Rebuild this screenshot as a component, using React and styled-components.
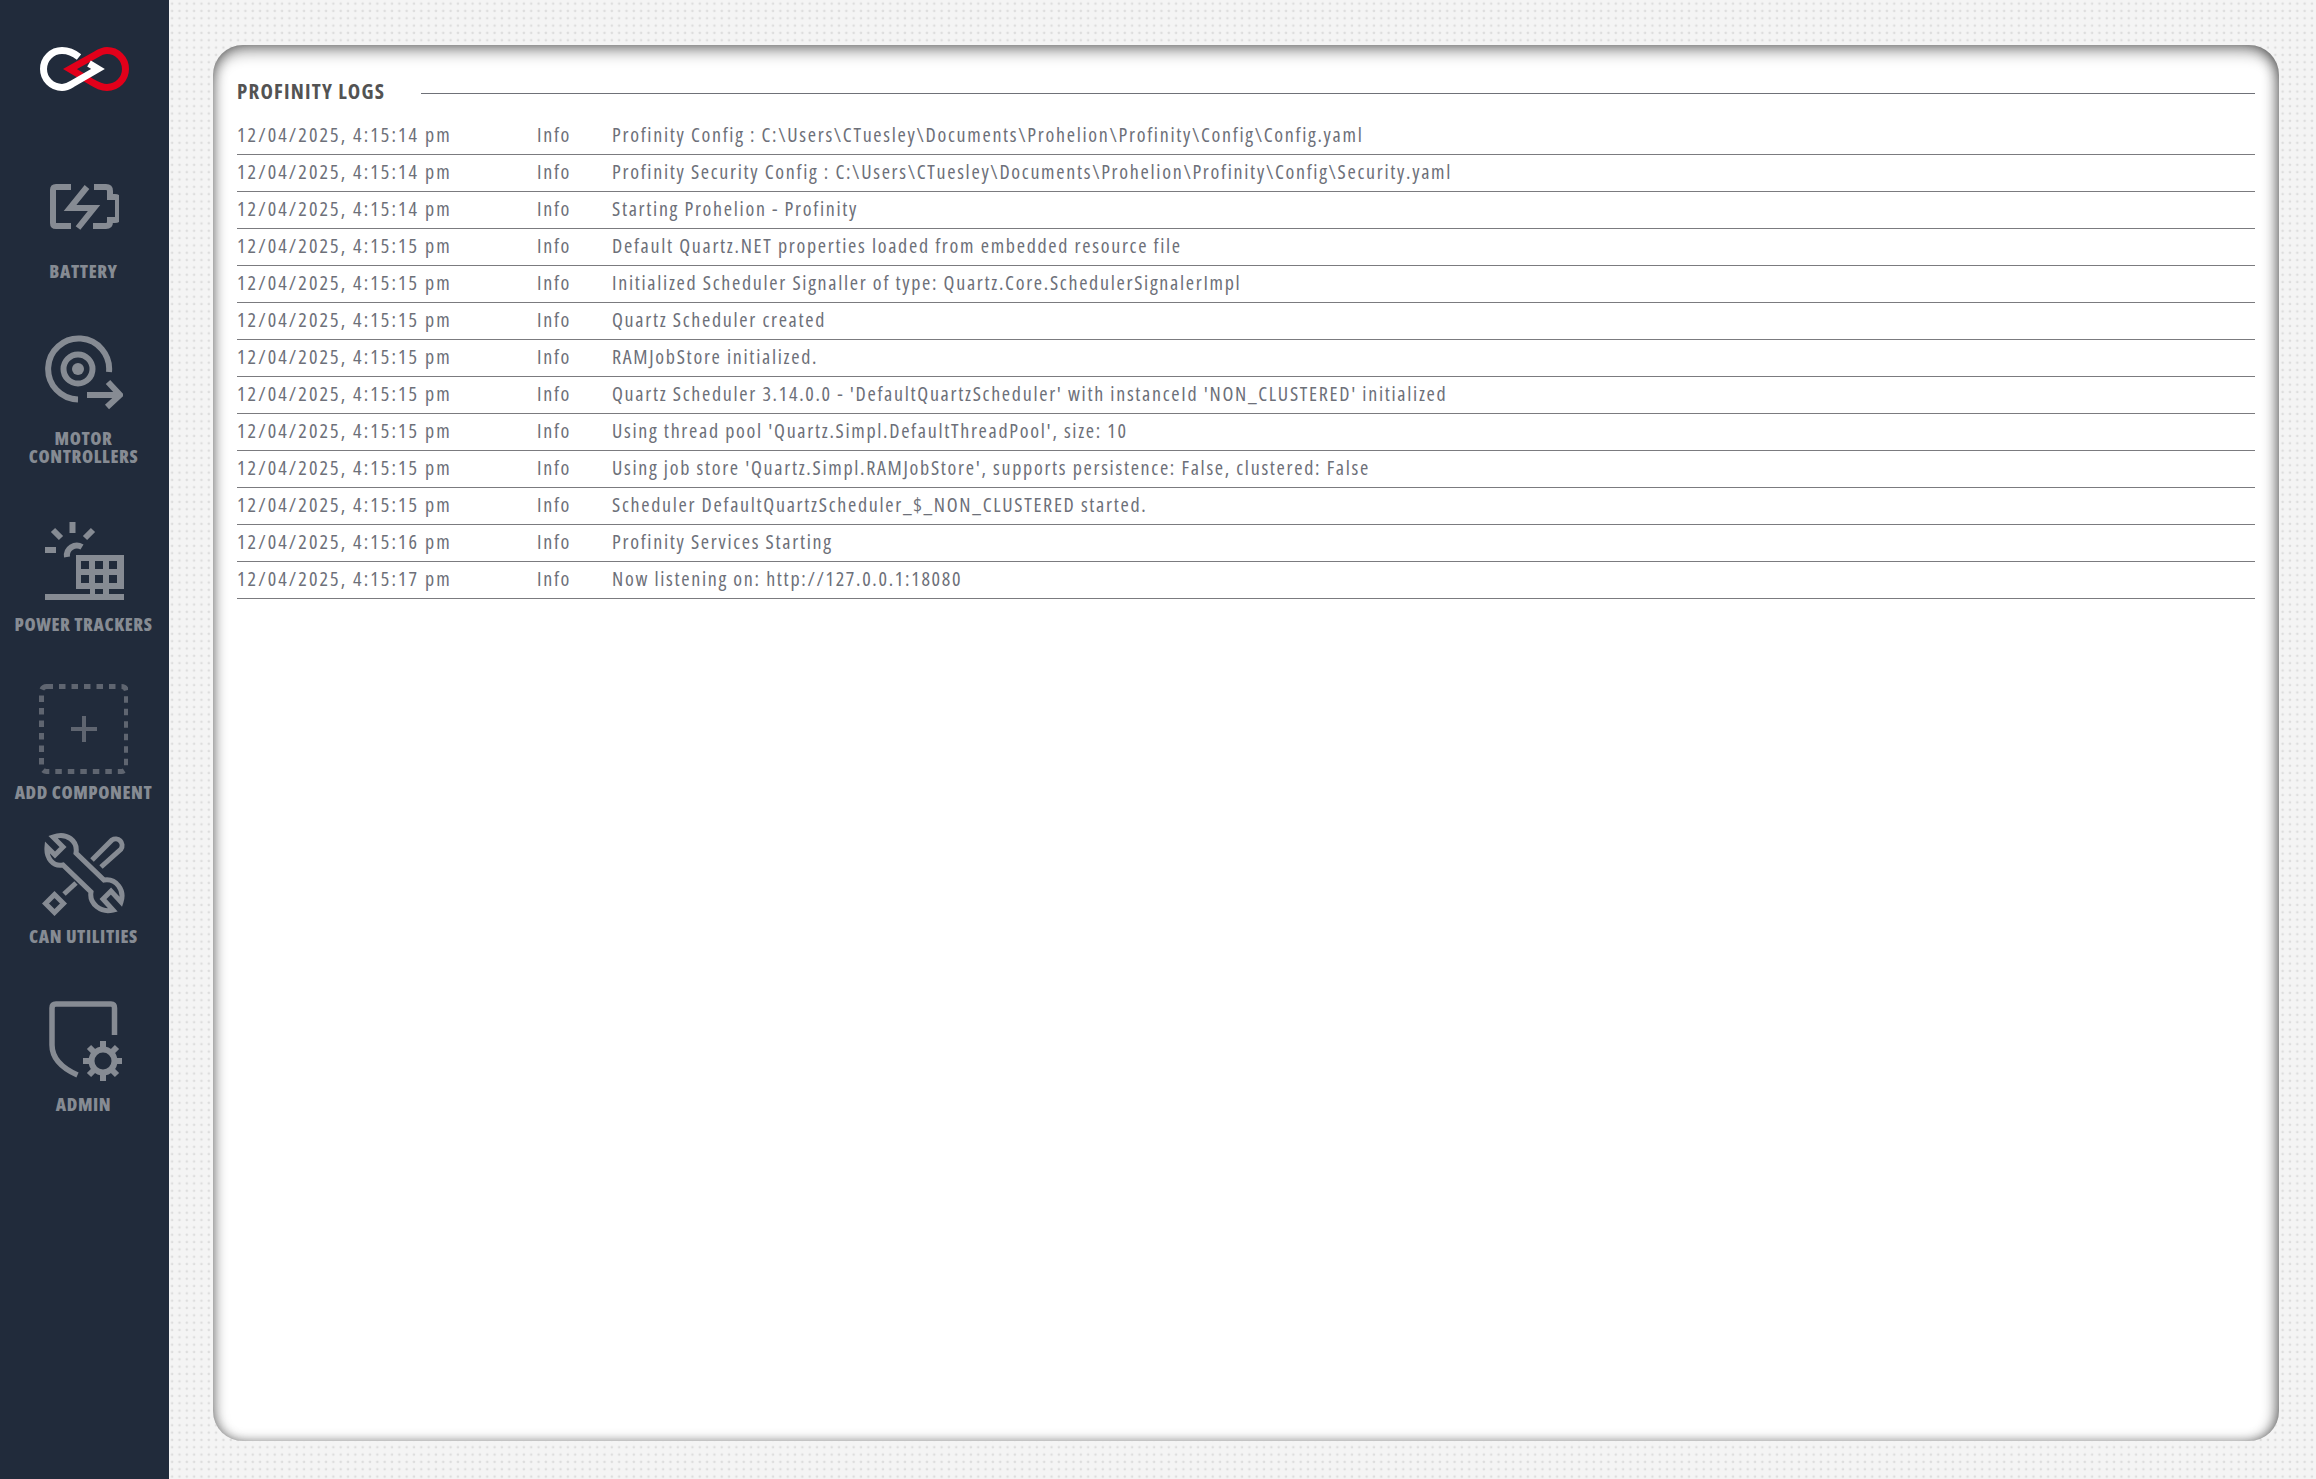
import React from "react";
import styled, { createGlobalStyle } from "styled-components";

const FONT = '"Open Sans", "Noto Sans", sans-serif';
const ICON = "#868b93";

const logs = [
  ["12/04/2025, 4:15:14 pm", "Profinity Config : C:\\Users\\CTuesley\\Documents\\Prohelion\\Profinity\\Config\\Config.yaml"],
  ["12/04/2025, 4:15:14 pm", "Profinity Security Config : C:\\Users\\CTuesley\\Documents\\Prohelion\\Profinity\\Config\\Security.yaml"],
  ["12/04/2025, 4:15:14 pm", "Starting Prohelion - Profinity"],
  ["12/04/2025, 4:15:15 pm", "Default Quartz.NET properties loaded from embedded resource file"],
  ["12/04/2025, 4:15:15 pm", "Initialized Scheduler Signaller of type: Quartz.Core.SchedulerSignalerImpl"],
  ["12/04/2025, 4:15:15 pm", "Quartz Scheduler created"],
  ["12/04/2025, 4:15:15 pm", "RAMJobStore initialized."],
  ["12/04/2025, 4:15:15 pm", "Quartz Scheduler 3.14.0.0 - 'DefaultQuartzScheduler' with instanceId 'NON_CLUSTERED' initialized"],
  ["12/04/2025, 4:15:15 pm", "Using thread pool 'Quartz.Simpl.DefaultThreadPool', size: 10"],
  ["12/04/2025, 4:15:15 pm", "Using job store 'Quartz.Simpl.RAMJobStore', supports persistence: False, clustered: False"],
  ["12/04/2025, 4:15:15 pm", "Scheduler DefaultQuartzScheduler_$_NON_CLUSTERED started."],
  ["12/04/2025, 4:15:16 pm", "Profinity Services Starting"],
  ["12/04/2025, 4:15:17 pm", "Now listening on: http://127.0.0.1:18080"],
];

const Logo = () => (
  <svg width="90" height="44" viewBox="39 47 90 44" fill="none" strokeWidth="7" strokeMiterlimit="6">
    <path stroke="#e2001a" d="M70 69 L96 54.5 C100 52 103 50.500 107 50.500 A18.500 18.500 0 0 1 107 87.500 C101 87.500 97 85 90 81 Z" />
    <path stroke="#fff" d="M79 57 C74 53 69 50.500 62 50.500 A18.500 18.500 0 0 0 62 87.500 C66 87.500 69 86 72 84 L98 69 L89 63.500" />
  </svg>
);

const BatteryIcon = () => (
  <svg width="70" height="46" viewBox="49 184 70 46" fill="none" stroke={ICON} strokeWidth="6">
    <path d="M71 187 H56 Q53 187 53 190 V223 Q53 226 56 226 H71" />
    <path d="M94 187 H106 Q110 187 110 191 V197 H115 Q118 197 118 200 V217 Q118 220 115 220 H110 V222 Q110 226 106 226 H93" />
    <path d="M87 187 L70 208 H94 L78 228" />
  </svg>
);

const MotorIcon = () => (
  <svg width="79" height="76" viewBox="44 335 79 76" fill="none" stroke={ICON} strokeWidth="6">
    <path d="M109 372 A30.500 30.500 0 1 0 78 399.500" />
    <circle cx="78" cy="369" r="14.500" />
    <circle cx="78" cy="369" r="6" fill={ICON} stroke="none" />
    <path d="M87 395 H119 M108 382 L120 395 L107 407" />
  </svg>
);

const TrackerIcon = () => (
  <svg width="80" height="79" viewBox="44 521 80 79" fill="none">
    <path stroke={ICON} strokeWidth="6" d="M72.500 522 V533 M53 530 L61 538 M93 530 L85 538 M45 550 H56" />
    <path stroke={ICON} strokeWidth="6" d="M67 557 A10 10 0 0 1 82 547" />
    <path fill={ICON} fillRule="evenodd" d="M76 555 H124 V589 H109 V594 H124 V600 H45 V594 H90 V589 H76 Z M81 561 V569 H89 V561 Z M95 561 V569 H103 V561 Z M109 561 V569 H117 V561 Z M81 575 V583 H89 V575 Z M95 575 V583 H103 V575 Z M109 575 V583 H117 V575 Z M95 589 V594 H103 V589 Z" />
  </svg>
);

const AddIcon = () => (
  <svg width="90" height="92" viewBox="38 683 90 92" fill="none" stroke="#5f6570">
    <rect x="41.500" y="686.500" width="85" height="85" rx="5" strokeWidth="5" strokeDasharray="6.500 6" />
    <path strokeWidth="4" d="M84 716 V742 M71 729 H97" />
  </svg>
);

const ToolsIcon = () => (
  <svg width="84" height="84" viewBox="41 832 84 84" fill="none" stroke={ICON} strokeWidth="5">
    <path d="M52 837 L62 847 L54 855 L46 847 C45 858 52 867 62 865 L90 892 C88 904 100 913 112 910 L102 899 L110 891 L120 902 C124 890 115 878 103 880 L75 853 C77 841 66 832 52 837 Z" />
    <path d="M91 860 L111 840 A6.500 6.500 0 0 1 120 849 L100 867" />
    <path d="M75 883 L63 894" />
    <path d="M44.500 903.500 L53.500 894.500 L62.500 903.500 L53.500 912.500 Z" />
  </svg>
);

const AdminIcon = () => (
  <svg width="76" height="84" viewBox="47 1000 76 84" fill="none" stroke={ICON}>
    <path strokeWidth="5.500" d="M115.500 1035 V1008 Q115.500 1004 112 1004 H57 Q53 1004 53 1008 V1045 C53 1060 65 1069 78.500 1075" />
    <circle cx="104" cy="1061" r="11.500" strokeWidth="6" />
    <path strokeWidth="6" d="M104 1041 V1050 M104 1072 V1081 M84 1061 H93 M115 1061 H124 M90 1047 L96 1053 M112 1069 L118 1075 M118 1047 L112 1053 M96 1069 L90 1075" />
  </svg>
);

const navItems = [
  { key: "battery", label: "BATTERY", icon: <BatteryIcon />, top: 93, gap: 32 },
  { key: "motor", label: "MOTOR\nCONTROLLERS", icon: <MotorIcon />, top: 55, gap: 18 },
  { key: "tracker", label: "POWER TRACKERS", icon: <TrackerIcon />, top: 56, gap: 15 },
  { key: "add", label: "ADD COMPONENT", icon: <AddIcon />, top: 50, gap: 8 },
  { key: "tools", label: "CAN UTILITIES", icon: <ToolsIcon />, top: 31, gap: 11 },
  { key: "admin", label: "ADMIN", icon: <AdminIcon />, top: 55, gap: 11 },
];

export default function App() {
  return (
    <>
      <GlobalStyle />
      <Page>
        <Sidebar>
          <LogoWrap>
            <Logo />
          </LogoWrap>
          {navItems.map((item) => (
            <NavItem key={item.key} $top={item.top} $gap={item.gap}>
              {item.icon}
              <NavLabel>{item.label}</NavLabel>
            </NavItem>
          ))}
        </Sidebar>
        <Main>
          <Panel>
            <TitleRow>
              <Title>PROFINITY LOGS</Title>
              <TitleRule />
            </TitleRow>
            <LogList>
              {logs.map(([time, message], i) => (
                <LogRow key={i}>
                  <TimeCell>{time}</TimeCell>
                  <LevelCell>Info</LevelCell>
                  <MessageCell>{message}</MessageCell>
                </LogRow>
              ))}
            </LogList>
          </Panel>
        </Main>
      </Page>
    </>
  );
}

const GlobalStyle = createGlobalStyle`
  html, body {
    margin: 0;
    padding: 0;
    height: 100%;
    overflow: hidden;
    font-family: ${FONT};
    font-stretch: 75%;
  }
`;

const Page = styled.div`
  display: flex;
  width: 100%;
  height: 100vh;
  background-color: #f4f4f4;
  background-image: radial-gradient(circle at 3.6px 3.6px, #dddddd 0, #dddddd 0.9px, transparent 1.6px);
  background-size: 7.33px 7.33px;
`;

const Sidebar = styled.nav`
  flex: 0 0 169px;
  box-sizing: border-box;
  padding-right: 2px;
  display: flex;
  flex-direction: column;
  align-items: center;
  background: #212b3b;
`;

const LogoWrap = styled.div`
  height: 44px;
  margin-top: 47px;
`;

const NavItem = styled.div`
  display: flex;
  flex-direction: column;
  align-items: center;
  margin-top: ${(p) => p.$top}px;
  gap: ${(p) => p.$gap}px;

  svg {
    display: block;
    flex: none;
  }
`;

const NavLabel = styled.div`
  font-size: 18px;
  line-height: 18px;
  font-weight: 800;
  font-stretch: 75%;
  letter-spacing: 0.6px;
  text-align: center;
  white-space: pre-line;
  color: #868b93;
`;

const Main = styled.main`
  flex: 1;
  display: flex;
  padding: 45px 37px 38px 44px;
  min-width: 0;
`;

const Panel = styled.section`
  flex: 1;
  padding: 34px 24px 0 24px;
  background: #fff;
  border-radius: 30px;
  box-shadow: inset 0 10px 16px -5px rgba(0, 0, 0, 0.48), inset 9px 0 13px -7px rgba(0, 0, 0, 0.36),
    inset -10px 0 14px -7px rgba(0, 0, 0, 0.46), inset 0 -7px 12px -6px rgba(0, 0, 0, 0.26);
`;

const TitleRow = styled.div`
  display: flex;
  align-items: center;
  height: 26px;
  margin-bottom: 13px;
`;

const Title = styled.h1`
  flex: 0 0 184px;
  margin: -2px 0 0;
  font-size: 21px;
  line-height: 26px;
  font-weight: 700;
  font-stretch: 75%;
  letter-spacing: 1.2px;
  color: #535353;
`;

const TitleRule = styled.div`
  flex: 1;
  height: 1px;
  margin-top: 2px;
  background: #6f7178;
`;

const LogList = styled.div`
  display: flex;
  flex-direction: column;
`;

const LogRow = styled.div`
  display: flex;
  align-items: center;
  box-sizing: border-box;
  height: 36px;
  padding-bottom: 3px;
  margin-bottom: 1px;
  box-shadow: 0 1px 0 #7b7b7f;
  font-size: 20px;
  letter-spacing: 1.7px;
  color: #6d7079;
  white-space: nowrap;
`;

const TimeCell = styled.div`
  flex: 0 0 300px;
  letter-spacing: 2.1px;
`;

const LevelCell = styled.div`
  flex: 0 0 75px;
`;

const MessageCell = styled.div`
  flex: 1;
`;
